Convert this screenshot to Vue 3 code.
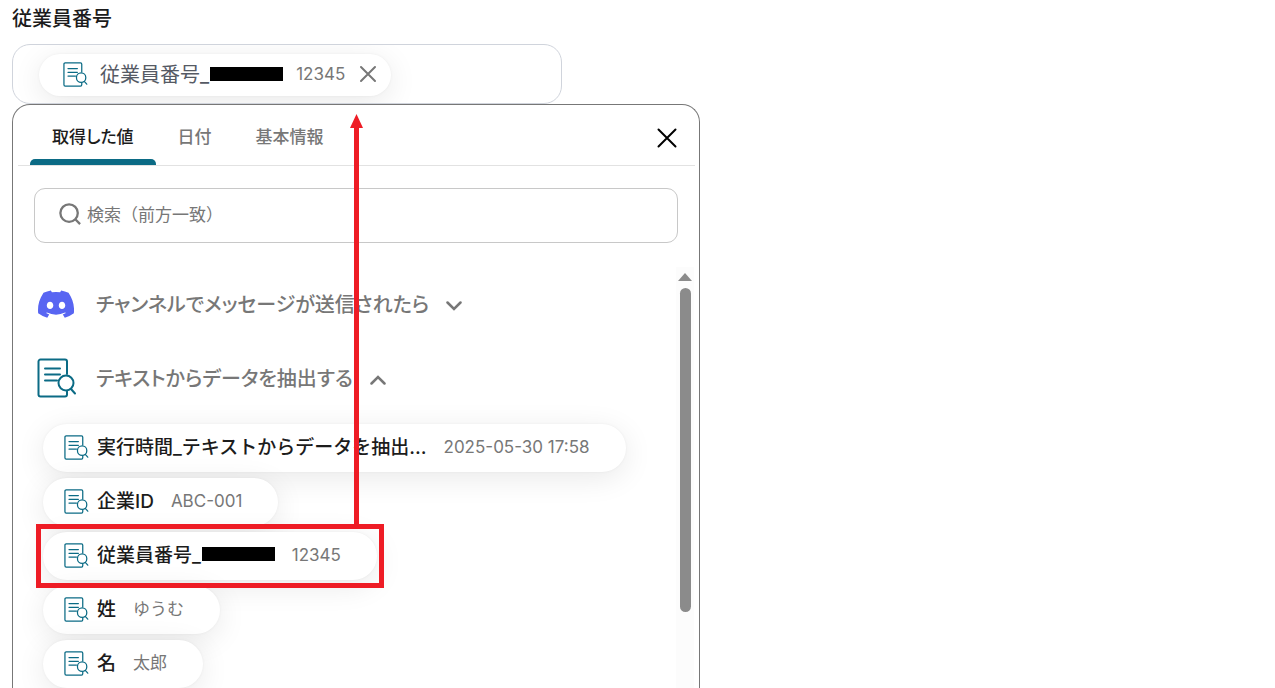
<script setup>
import { ref } from 'vue'

const tabs = ['取得した値', '日付', '基本情報']
const activeTab = ref(0)
const query = ref('')
const items = [
  { label: '実行時間_テキストからデータを抽出…', value: '2025-05-30 17:58' },
  { label: '企業ID', value: 'ABC-001' },
  { label: '従業員番号_', masked: true, value: '12345', marked: true },
  { label: '姓', value: 'ゆうむ' },
  { label: '名', value: '太郎' },
]
</script>

<template>
  <main class="page">
    <svg class="defs" aria-hidden="true">
      <symbol id="doc-search" viewBox="0 0 40 40">
        <g fill="none" stroke="#0b6b85" stroke-linecap="round">
          <path d="M30 16V3.500a2 2 0 0 0-2-2H3.500a2 2 0 0 0-2 2v33a2 2 0 0 0 2 2H28a2 2 0 0 0 2-2V33.500" />
          <path d="M8 10.500h15M8 16.500h15M8 22.500h12" />
          <circle cx="29" cy="25" r="7.500" />
          <path d="M34 31l4 4.500" />
        </g>
      </symbol>
    </svg>

    <h1 class="title">従業員番号</h1>

    <div class="field">
      <div class="token">
        <svg class="icon-small"><use href="#doc-search" /></svg>
        <span class="token-label">従業員番号_<i class="mask"></i></span>
        <span class="value">12345</span>
        <button class="token-close" type="button" aria-label="削除">
          <svg viewBox="0 0 18 18"><path d="M2 2l14 14M16 2L2 16" /></svg>
        </button>
      </div>
    </div>

    <section class="panel">
      <header class="panel-head">
        <nav class="tabs" role="tablist">
          <button
            v-for="(tab, i) in tabs"
            :key="tab"
            type="button"
            role="tab"
            class="tab"
            :class="{ active: i === activeTab }"
            :aria-selected="i === activeTab"
            @click="activeTab = i"
          >{{ tab }}</button>
        </nav>
        <button class="panel-close" type="button" aria-label="閉じる">
          <svg viewBox="0 0 20 20"><path d="M1.500 1.500l17 17M18.500 1.500l-17 17" /></svg>
        </button>
      </header>

      <label class="search">
        <svg viewBox="0 0 24 24"><circle cx="11" cy="11" r="9.500" /><path d="M17.500 17.500l5.500 5.500" /></svg>
        <input v-model="query" type="text" placeholder="検索（前方一致）" aria-label="検索" />
      </label>

      <div class="body">
        <div class="list">
          <button class="group" type="button">
            <span class="group-icon">
              <svg class="discord" viewBox="0 0 127 96">
                <path fill="#5865f2" d="M107.700 8.070A105.150 105.150 0 0 0 81.470 0a72.060 72.060 0 0 0-3.360 6.830 97.680 97.680 0 0 0-29.110 0A72.370 72.370 0 0 0 45.640 0a105.890 105.890 0 0 0-26.250 8.090C2.790 32.650-1.710 56.600.540 80.210a105.730 105.730 0 0 0 32.170 16.150 77.700 77.700 0 0 0 6.890-11.110 68.420 68.420 0 0 1-10.850-5.180c.910-.660 1.800-1.340 2.660-2a75.570 75.570 0 0 0 64.320 0c.870.710 1.760 1.390 2.660 2a68.680 68.680 0 0 1-10.870 5.190 77 77 0 0 0 6.890 11.100 105.250 105.250 0 0 0 32.190-16.140c2.640-27.380-4.510-51.110-18.900-72.150zM42.450 65.690C36.180 65.690 31 60 31 53s5-12.740 11.430-12.740S54 46 53.890 53s-5.050 12.690-11.440 12.690zm42.240 0C78.410 65.690 73.250 60 73.250 53s5-12.740 11.440-12.740S96.230 46 96.120 53s-5.040 12.690-11.430 12.690z" />
              </svg>
            </span>
            <span class="group-label">チャンネルでメッセージが送信されたら</span>
            <svg class="chevron" viewBox="0 0 16 10"><path d="M1.500 1.500L8 8l6.500-6.500" /></svg>
          </button>
          <button class="group" type="button">
            <span class="group-icon"><svg class="icon-large"><use href="#doc-search" /></svg></span>
            <span class="group-label">テキストからデータを抽出する</span>
            <svg class="chevron" viewBox="0 0 16 10"><path d="M1.500 8.500L8 2l6.500 6.500" /></svg>
          </button>

          <ul class="items">
            <li v-for="item in items" :key="item.label" class="row">
              <button class="chip" type="button">
                <svg class="icon-small"><use href="#doc-search" /></svg>
                <span class="chip-label">{{ item.label }}<i v-if="item.masked" class="mask"></i></span>
                <span class="value">{{ item.value }}</span>
              </button>
              <span v-if="item.marked" class="marker">
                <svg class="arrow" viewBox="0 0 13 415"><path d="M6.500 0L13 14H9v401H4V14H0z" /></svg>
              </span>
            </li>
          </ul>
        </div>
        <div class="scrollbar" aria-hidden="true">
          <svg viewBox="0 0 14 8"><path d="M7 0l7 8H0z" /></svg>
          <span class="thumb"></span>
        </div>
      </div>
    </section>
  </main>
</template>

<style>
body {
  margin: 0;
  background: #fff;
}
</style>

<style scoped>
.page {
  box-sizing: border-box;
  height: 100vh;
  overflow: hidden;
  padding: 0 12px;
  display: flex;
  flex-direction: column;
  font-family: Inter, "Noto Sans CJK JP", sans-serif;
  line-height: 24px;
  color: #1c1c1c;
}
.defs {
  position: absolute;
  width: 0;
  height: 0;
}
button,
input {
  font: inherit;
  color: inherit;
  background: none;
  border: 0;
  padding: 0;
  margin: 0;
}
button {
  cursor: pointer;
}
.title {
  margin: 0;
  height: 44px;
  line-height: 38px;
  font-size: 20px;
  font-weight: 500;
  flex: none;
}
.field {
  box-sizing: border-box;
  flex: none;
  width: 100%;
  max-width: 550px;
  height: 60px;
  padding: 2px 26px 0;
  border: 1px solid #d0d4dc;
  border-radius: 18px;
  display: flex;
  align-items: center;
  overflow: hidden;
}
.token,
.chip {
  display: flex;
  align-items: center;
  background: #fff;
  box-shadow: 0 6px 30px rgba(0, 0, 0, 0.09), 0 0 3px rgba(0, 0, 0, 0.05);
  border-radius: 24px;
  white-space: nowrap;
}
.token {
  box-sizing: border-box;
  height: 42px;
  padding: 0 14px 2px 24px;
}
.icon-small {
  width: 25px;
  height: 25px;
  stroke-width: 2;
  flex: none;
}
.icon-large {
  width: 40px;
  height: 40px;
  margin-left: 2px;
  stroke-width: 2;
}
.token-label {
  margin-left: 12px;
  font-size: 20px;
  color: #555a64;
}
.mask {
  display: inline-block;
  width: 73px;
  height: 14px;
  margin-left: 1px;
  background: #000;
  vertical-align: 1px;
}
.value {
  font-size: 17px;
  font-weight: 400;
  color: #777;
}
.token .value {
  margin-left: 13px;
}
.token-close {
  display: flex;
  margin-left: 14px;
}
.token-close svg {
  width: 18px;
  height: 18px;
  stroke: #777;
  stroke-width: 2;
  stroke-linecap: round;
}
.panel {
  position: relative;
  box-sizing: border-box;
  flex: 1;
  min-height: 0;
  width: 100%;
  max-width: 688px;
  background: #fff;
  border: 1px solid #777;
  border-bottom: 0;
  border-radius: 18px 18px 0 0;
  display: flex;
  flex-direction: column;
}
.panel-head {
  box-sizing: border-box;
  flex: none;
  display: flex;
  justify-content: space-between;
  align-items: center;
  height: 61px;
  margin: 0 4px 0 5px;
  padding: 5px 18px 0 12px;
  border-bottom: 1px solid #e2e2e2;
}
.tabs {
  display: flex;
  align-self: stretch;
}
.tab {
  padding: 0 22px 2px;
  font-size: 17px;
  font-weight: 500;
  font-feature-settings: "palt";
  color: #777;
  position: relative;
}
.tab.active {
  color: #1c1c1c;
}
.tab.active::after {
  content: "";
  position: absolute;
  left: 0;
  right: 0;
  bottom: 0;
  height: 6px;
  border-radius: 5px 5px 0 0;
  background: #0b6b85;
}
.panel-close {
  display: flex;
}
.panel-close svg {
  width: 20px;
  height: 20px;
  stroke: #000;
  stroke-width: 2;
  stroke-linecap: round;
}
.search {
  box-sizing: border-box;
  flex: none;
  display: flex;
  align-items: center;
  gap: 6px;
  height: 55px;
  margin: 22px 21px 0;
  padding: 0 24px 3px;
  border: 1px solid #c8c8c8;
  border-radius: 11px;
}
.search svg {
  width: 22px;
  height: 22px;
  fill: none;
  stroke: #777;
  stroke-width: 2.500;
  overflow: visible;
}
.search input {
  flex: 1;
  min-width: 0;
  padding-top: 2px;
  font-size: 17px;
  outline: 0;
}
.search input::placeholder {
  color: #777;
  opacity: 1;
}
.body {
  flex: 1;
  min-height: 0;
  display: flex;
  margin: 24px 5px 0 21px;
}
.list {
  flex: 1;
  min-width: 0;
}
.group {
  display: flex;
  align-items: center;
  height: 74px;
  font-size: 20px;
  font-weight: 500;
  font-feature-settings: "palt";
  color: #777;
}
.group-icon {
  display: flex;
  justify-content: center;
  width: 44px;
  margin-right: 18px;
}
.group-label,
.chip-label,
.token-label {
  padding-top: 2px;
}
.discord {
  width: 36px;
  height: 28px;
}
.chevron {
  width: 16px;
  height: 10px;
  margin-top: 3px;
  margin-left: 17px;
  fill: none;
  stroke: #777;
  stroke-width: 2.500;
  stroke-linecap: round;
}
.items {
  list-style: none;
  margin: 9px 0 0;
  padding: 0 0 0 9px;
  display: flex;
  flex-direction: column;
  align-items: flex-start;
  gap: 6px;
}
.row {
  position: relative;
}
.chip {
  box-sizing: border-box;
  height: 48px;
  padding: 0 36px 2px 21px;
}
.chip-label {
  margin-left: 8px;
  font-size: 19px;
  font-weight: 500;
}
.chip .value {
  margin-left: 17px;
}
.marker {
  position: absolute;
  z-index: 1;
  inset: -8px -7px;
  border: 5px solid #ee1c25;
  pointer-events: none;
}
.arrow {
  position: absolute;
  right: 16px;
  bottom: 100%;
  width: 13px;
  height: 415px;
  fill: #ee1c25;
}
.scrollbar {
  flex: none;
  width: 18px;
  padding-top: 6px;
  background: #fcfcfc;
  display: flex;
  flex-direction: column;
  align-items: center;
}
.scrollbar svg {
  width: 14px;
  height: 8px;
  fill: #8b8b8b;
}
.thumb {
  width: 11px;
  height: 324px;
  margin-top: 7px;
  border-radius: 6px;
  background: #8b8b8b;
}
</style>
